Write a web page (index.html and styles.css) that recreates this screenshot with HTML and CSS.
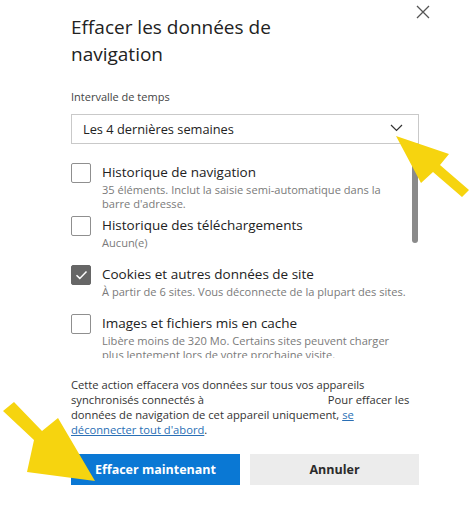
FILE: index.html
```html
<!DOCTYPE html>
<html lang="fr">
<head>
<meta charset="utf-8">
<link rel="stylesheet" href="styles.css">
</head>
<body>
<div class="dialog">
  <button class="close" aria-label="Fermer">
    <svg width="14" height="14" viewBox="0 0 14 14"><path d="M1 1L13 13M13 1L1 13" stroke="#555" stroke-width="1.3" fill="none"/></svg>
  </button>
  <h1 class="title">Effacer les données de navigation</h1>
  <div class="label">Intervalle de temps</div>
  <div class="select">
    <span>Les 4 dernières semaines</span>
    <svg class="chev" width="13" height="8" viewBox="0 0 13 8"><path d="M1 1L6.5 6.5L12 1" stroke="#333" stroke-width="1.2" fill="none"/></svg>
  </div>
  <div class="scroll">
    <div class="item">
      <span class="box"></span>
      <div class="txt">
        <div class="it">Historique de navigation</div>
        <div class="desc">35 éléments. Inclut la saisie semi-automatique dans la barre d'adresse.</div>
      </div>
    </div>
    <div class="item">
      <span class="box"></span>
      <div class="txt">
        <div class="it">Historique des téléchargements</div>
        <div class="desc">Aucun(e)</div>
      </div>
    </div>
    <div class="item">
      <span class="box checked">
        <svg width="13" height="10" viewBox="0 0 13 10"><path d="M1.5 5.2L4.8 8.4L11.5 1.5" stroke="#fff" stroke-width="1.5" fill="none"/></svg>
      </span>
      <div class="txt">
        <div class="it">Cookies et autres données de site</div>
        <div class="desc">À partir de 6 sites. Vous déconnecte de la plupart des sites.</div>
      </div>
    </div>
    <div class="item">
      <span class="box"></span>
      <div class="txt">
        <div class="it">Images et fichiers mis en cache</div>
        <div class="desc">Libère moins de 320 Mo. Certains sites peuvent charger plus lentement lors de votre prochaine visite.</div>
      </div>
    </div>
    <div class="thumb"></div>
  </div>
  <p class="note">Cette action effacera vos données sur tous vos appareils synchronisés connectés à <span class="redact"></span> Pour effacer les données de navigation de cet appareil uniquement, <a href="#">se déconnecter tout d'abord</a>.</p>
  <div class="actions">
    <button class="btn primary">Effacer maintenant</button>
    <button class="btn secondary">Annuler</button>
  </div>
</div>
<svg class="arrow" width="474" height="509" viewBox="0 0 474 509">
  <polygon points="396,136 449,154 440,165 469,190 462,197 433,172 421,183" fill="#f6d40f"/>
  <polygon points="95,481 27,472 34,440 3,411 14,402 42,431 58,418" fill="#f6d40f"/>
</svg>
</body>
</html>
```

FILE: styles.css
```css
html, body {
  margin: 0;
  padding: 0;
  background: #fff;
}
body {
  font-family: "Open Sans", "Noto Sans", sans-serif;
  color: #1b1b1b;
  width: 474px;
  height: 509px;
  overflow: hidden;
  position: relative;
}
.dialog {
  position: relative;
  padding: 14px 55px 0 71px;
  width: 348px;
}
.close {
  position: absolute;
  left: 416px;
  top: 5px;
  width: 14px;
  height: 14px;
  padding: 0;
  border: 0;
  background: none;
  display: flex;
}
.title {
  margin: 0;
  font-size: 19px;
  font-weight: 400;
  line-height: 27px;
  width: 240px;
  color: #222;
}
.label {
  margin-top: 21px;
  font-size: 11px;
  line-height: 16px;
  color: #444;
}
.select {
  margin-top: 9px;
  height: 28px;
  border: 1px solid #c9c9c9;
  display: flex;
  align-items: center;
  justify-content: space-between;
  padding: 0 15px 0 11px;
  font-size: 12.8px;
  color: #222;
}
.chev {
  margin-top: -2px;
}
.scroll {
  position: relative;
  margin-top: 6px;
  height: 208px;
  overflow: hidden;
  padding-top: 12px;
  box-sizing: border-box;
  display: flex;
  flex-direction: column;
  gap: 4px;
}
.item {
  display: flex;
  gap: 11px;
  min-height: 45px;
  flex-shrink: 0;
}
.box {
  width: 18px;
  height: 18px;
  border: 1px solid #8f8f8f;
  border-radius: 2px;
  margin-top: 1px;
  flex-shrink: 0;
  display: flex;
  align-items: center;
  justify-content: center;
}
.box.checked {
  background: #666;
  border-color: #666;
}
.txt {
  width: 307px;
}
.it {
  font-size: 13.5px;
  line-height: 21px;
  color: #222;
}
.desc {
  font-size: 11.1px;
  line-height: 14px;
  color: #7a7a7a;
}
.thumb {
  position: absolute;
  left: 341px;
  top: 0;
  width: 6px;
  height: 93px;
  border-radius: 3px;
  background: #8a8a8a;
}
.note {
  margin: 19px 0 0;
  font-size: 11.2px;
  line-height: 15px;
  color: #333;
}
.redact {
  display: inline-block;
  width: 118px;
}
.note a {
  color: #2a6fb5;
  text-decoration: underline;
}
.actions {
  margin-top: 17px;
  display: flex;
  gap: 10px;
}
.btn {
  flex: 1;
  height: 31px;
  border: 0;
  font-family: inherit;
  font-size: 12.5px;
  font-weight: 700;
}
.primary {
  background: #0a78d4;
  color: #fff;
}
.secondary {
  background: #ececec;
  color: #2b2b2b;
}
.arrow {
  position: absolute;
  left: 0;
  top: 0;
  pointer-events: none;
}
```
